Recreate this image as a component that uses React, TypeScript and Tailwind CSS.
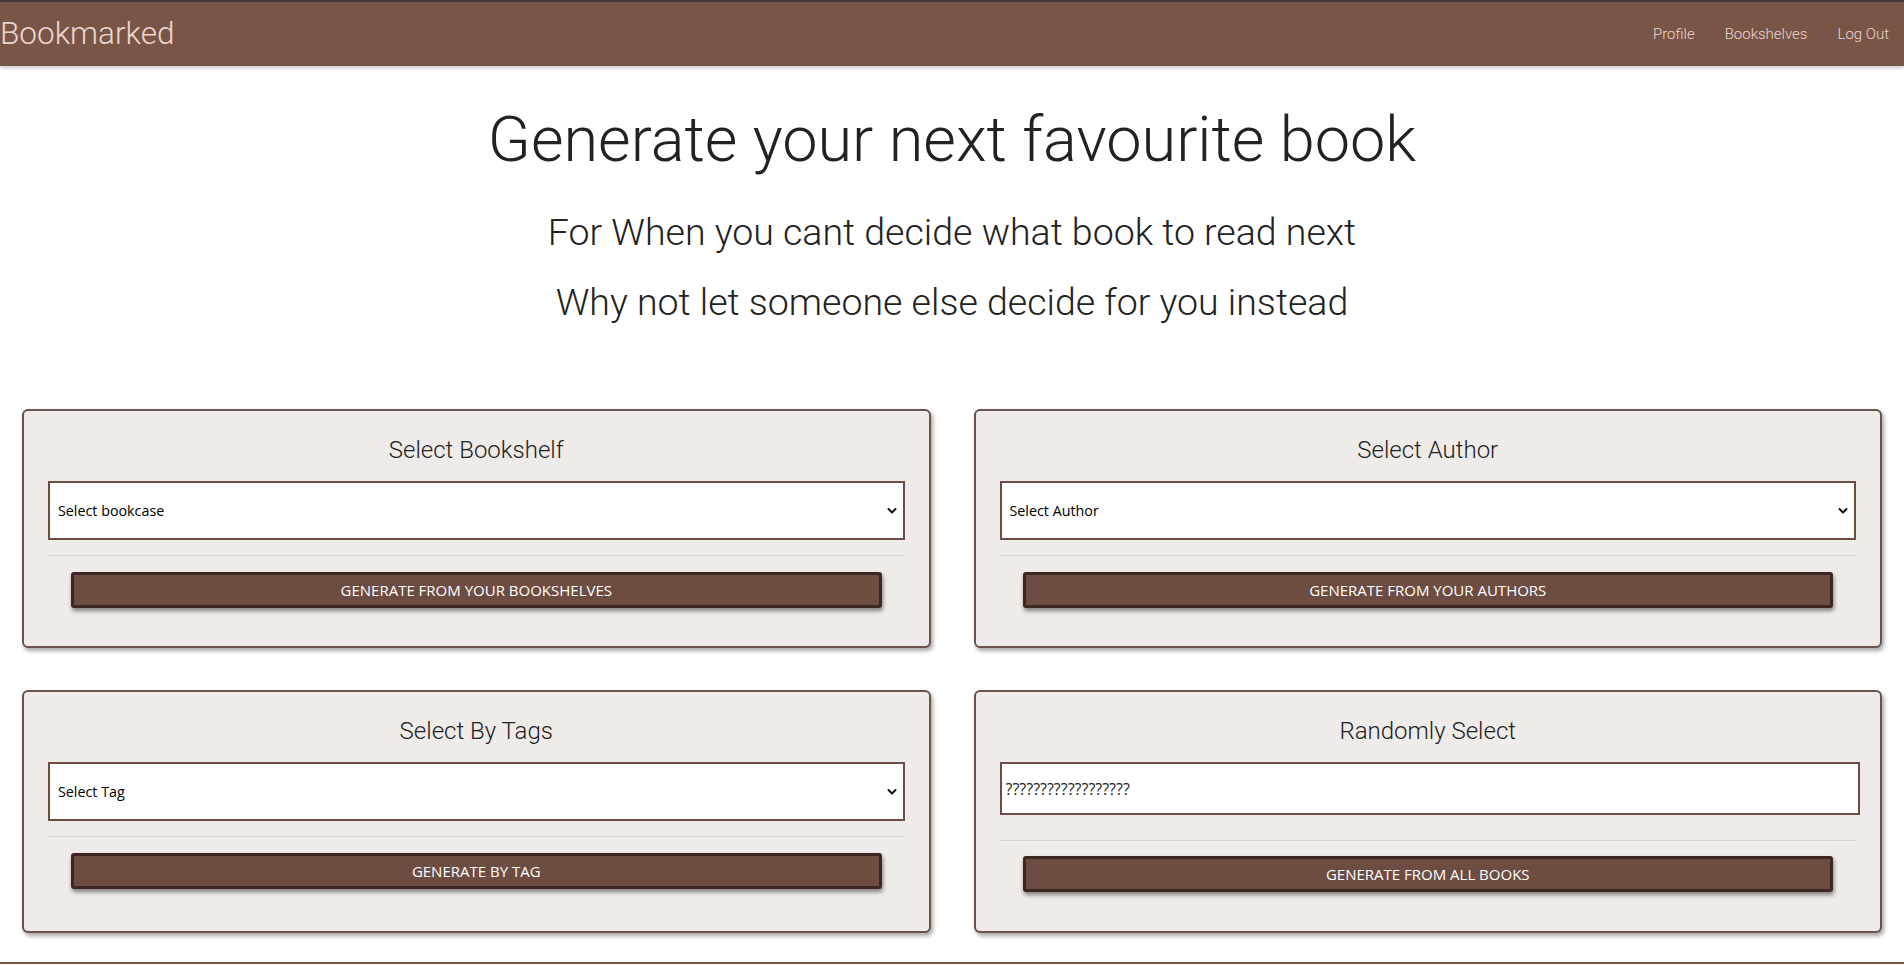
import { useState } from "react";

const links = ["Profile", "Bookshelves", "Log Out"];

function Chevron() {
  return (
    <svg
      className="pointer-events-none absolute right-[8px] top-1/2 h-[7px] w-[10px] -translate-y-1/2"
      viewBox="0 0 10 7"
      fill="none"
    >
      <path d="M1.5 1.5L5 5l3.5-3.5" stroke="#111" strokeWidth="2" strokeLinecap="round" strokeLinejoin="round" />
    </svg>
  );
}

function GenButton({ label }: { label: string }) {
  return (
    <button
      type="button"
      className="mx-[23px] mt-[16px] block h-[36px] w-[calc(100%-46px)] rounded-[3px] border-[3px] border-[#3e2723] bg-[#6d4c41] font-['Open_Sans',sans-serif] text-[15px] uppercase leading-none text-white shadow-[1px_3px_4px_rgba(0,0,0,0.45)]"
    >
      {label}
    </button>
  );
}

function SelectCard({
  title,
  placeholder,
  button,
}: {
  title: string;
  placeholder: string;
  button: string;
}) {
  const [value, setValue] = useState("");
  return (
    <div className="rounded-[6px] border-2 border-[#6b524b] bg-[#eeebe8] px-[24px] pt-[24px] pb-[38px] shadow-[2px_3px_4px_rgba(0,0,0,0.35)]">
      <h5 className="text-center text-[24px] font-light leading-[31px] text-[#222]">{title}</h5>
      <div className="relative mt-[15px]">
        <select
          value={value}
          onChange={(e) => setValue(e.target.value)}
          className="block h-[59px] w-full appearance-none border-2 border-[#6d4c41] bg-[#fdfdfd] pl-[8px] font-['Open_Sans',sans-serif] text-[14.3px] text-black outline-none"
        >
          <option value="">{placeholder}</option>
        </select>
        <Chevron />
      </div>
      <div className="mt-[15px] h-px bg-[#dcd6d2]" />
      <GenButton label={button} />
    </div>
  );
}

export default function App() {
  return (
    <div className="min-h-screen bg-white font-['Roboto',sans-serif] text-[#222]">
      {/* navbar */}
      <nav className="flex h-[66px] items-center justify-between border-t-2 border-[#3d3b3a] bg-[#795548] shadow-[0_2px_4px_rgba(0,0,0,0.22)]">
        <a href="#" className="text-[31.5px] font-light leading-none text-[#ecd6ce]">
          Bookmarked
        </a>
        <ul className="flex h-full">
          {links.map((l) => (
            <li key={l}>
              <a href="#" className="flex h-full items-center px-[15px] text-[15px] font-light text-[#ecd6ce]">
                {l}
              </a>
            </li>
          ))}
        </ul>
      </nav>

      <main>
        <h1 className="mt-[39px] text-center text-[63px] font-light leading-[70px]">
          Generate your next favourite book
        </h1>
        <h4 className="mt-[32px] text-center text-[37.5px] font-light leading-[50px]">
          For When you cant decide what book to read next
        </h4>
        <h4 className="mt-[20px] text-center text-[37.5px] font-light leading-[50px]">
          Why not let someone else decide for you instead
        </h4>

        <div className="mt-[82px] grid grid-cols-2 gap-x-[43px] gap-y-[42px] px-[22px]">
          <SelectCard title="Select Bookshelf" placeholder="Select bookcase" button="Generate from your bookshelves" />
          <SelectCard title="Select Author" placeholder="Select Author" button="Generate from your authors" />
          <SelectCard title="Select By Tags" placeholder="Select Tag" button="Generate by tag" />

          {/* random card */}
          <div className="rounded-[6px] border-2 border-[#6b524b] bg-[#eeebe8] px-[24px] pt-[24px] pb-[39px] shadow-[2px_3px_4px_rgba(0,0,0,0.35)]">
            <h5 className="text-center text-[24px] font-light leading-[31px] text-[#222]">Randomly Select</h5>
            <input
              readOnly
              value="??????????????????"
              className="mt-[15px] block h-[53px] w-[calc(100%+4px)] border-2 border-[#6d4c41] bg-white pl-[4px] font-['Open_Sans',sans-serif] text-[16px] text-[#222] outline-none"
            />
            <div className="mt-[25px] h-px bg-[#dcd6d2]" />
            <button
              type="button"
              className="mx-[23px] mt-[15px] block h-[36px] w-[calc(100%-46px)] rounded-[3px] border-[3px] border-[#3e2723] bg-[#6d4c41] font-['Open_Sans',sans-serif] text-[15px] uppercase leading-none text-white shadow-[1px_3px_4px_rgba(0,0,0,0.45)]"
            >
              Generate from all books
            </button>
          </div>
        </div>
      </main>

      <footer className="mt-[29px] h-[40px] border-t-2 border-[#795548]" />
    </div>
  );
}
